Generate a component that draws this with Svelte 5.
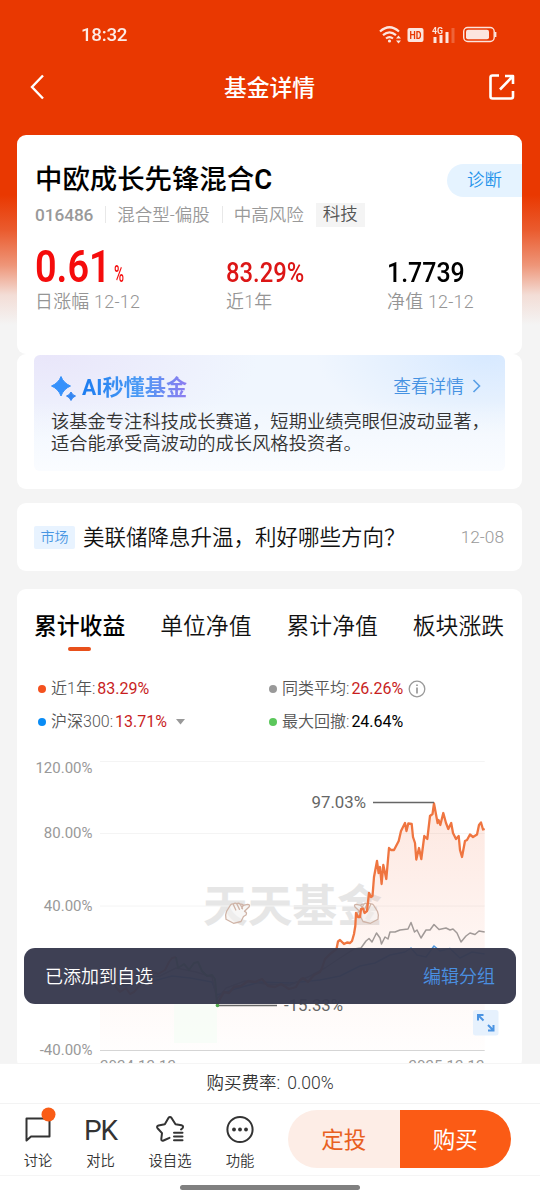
<script>
	const tabs = ['累计收益', '单位净值', '累计净值', '板块涨跌'];

	const legend = [
		{ color: '#f4511e', name: '近1年', value: '83.29%', up: true },
		{ color: '#999', name: '同类平均', value: '26.26%', up: true, info: true },
		{ color: '#0a8cf5', name: '沪深300', value: '13.71%', up: true, more: true },
		{ color: '#5bc75b', name: '最大回撤', value: '24.64%', up: false }
	];

	const grid = [
		{ y: 761.5, label: '120.00%', ty: 773 },
		{ y: 833.5, label: '80.00%', ty: 838 },
		{ y: 906, label: '40.00%', ty: 910.5 }
	];

	const before =
		'100,978 108,972 114,985 120,992 126,988 130,994 134,992 140,985 146,979 151,971 158,974 165,970 169,962 172,958 176,957';
	const drawdown =
		'176,957 178,968 184,964 189,970 194,963 198,962 202,971 207,976 212,975 215,979 216,990 217,1006';
	const fund =
		'217,1006 220,999 224,992 229,993 234,987 241,986 248,981 255,982 262,979 268,986 275,987 281,984 289,989 296,987 300,980 303,978 308,982 314,975 320,972 322,968 325,959 330,954 336.5,949 338,941.5 340,940 344,944 347,942.5 350,943 352,941 354,934 355.3,926 356,913 358,917 360,917 361,909 363,908.5 364.5,913 367,911 369,893 371,897 372.5,896 374,877 377,861 378.6,873 380,867 381.6,884 383.3,865 386.3,879 389,848 391,850 394,850 398.7,841 401,831 405,823 406.5,831 408.3,823.5 411.7,824 413,837 415,843 416.3,859.5 419,848 421.3,859 424.3,836 427.3,839 430,816 432.5,814 434,803.5 437.6,823 438.6,820 440.3,825 443.3,813 446,823 448.3,829 451.2,823 453,833 456,839 458.7,836 460,850 462,857 465,841 467,840 470,834.5 473,837 477,834.5 479,825 481,822.5 483,829.5 484.7,829';
	const average =
		'100,978 120,985 140,979 160,976 176,968 196,972 212,977 217,999 226,988 245,981 265,984 290,985 310,976 325,968 340,958 354,949 361,948 366,941 369,938.5 372,942 376.5,933 380,938 381.5,944 385,937 388,939 390,932 395,932 400,930 408,929 411,922.5 414.5,932 417,930 421,938 426,930 430,930 434,924.5 439,929.5 446,928 450,930 453,929 457,933 461,942 466,936 470,933 475,934.5 479,931 484.7,932';
	const index300 =
		'100,978 125,986 150,982 172,976 190,978 212,982 217,995 235,989 260,982 290,983 320,980 340,976 360,966 375,963 390,955 405,952 411,948 417,955 426,957 434,946 440,951 450,948.5 460,958 472,952 484.7,954';
	const area = `M100,1050 L${before} L${drawdown} L${fund} L484.7,1050 Z`;
</script>

<div class="phone">
	<header>
		<div class="status">
			<span>18:32</span>
			<svg width="120" height="24" viewBox="378 23 120 24" fill="none" stroke="#fff" opacity=".87">
				<g stroke-width="2.2">
					<path d="M380 31.5Q389.500 23 399 31.500" />
					<path d="M383 35.200Q389.500 29.500 396 35.200" />
					<path d="M386 38.500Q389.500 35.800 393 38.500" />
				</g>
				<circle cx="389.500" cy="41" r="1.600" fill="#fff" stroke="none" />
				<path d="M396 38.500h5l-2.500-3zM396 40.500h5l-2.500 3z" fill="#fff" stroke="none" />
				<rect x="407.500" y="28" width="16" height="14" rx="2" fill="#fff" stroke="none" />
				<text x="409.500" y="39" class="hd" textLength="12" lengthAdjust="spacingAndGlyphs">HD</text>
				<text x="432" y="34" class="net" textLength="11" lengthAdjust="spacingAndGlyphs">4G</text>
				<path d="M435 37v6M441 35v8M447 32v11" stroke-width="3" />
				<path d="M453 28v15" stroke-width="3" opacity=".25" />
				<rect x="463.700" y="27.500" width="30.500" height="14" rx="4" stroke-width="1.400" />
				<rect x="466" y="29.800" width="23" height="9.400" rx="2" fill="#fff" stroke="none" />
				<path d="M495.500 32v5" stroke-width="1.800" />
			</svg>
		</div>
		<div class="nav">
			<svg width="16" height="26" viewBox="0 0 16 26" fill="none" stroke="#fff" stroke-width="2.400">
				<path d="M14 1.500L3 13l11 11.500" />
			</svg>
			<h1>基金详情</h1>
			<svg width="26" height="26" viewBox="0 0 26 26" fill="none" stroke="#fff" stroke-width="2.600" stroke-linejoin="round">
				<path d="M10 1.500H3.500Q1.500 1.500 1.500 3.500v19q0 2 2 2H22q2 0 2-2V17" />
				<path d="M11 15.500L23.500 2.500M16 2h8v8" />
			</svg>
		</div>
	</header>

	<main>
		<section class="card fund">
			<div class="title">
				<h2>中欧成长先锋混合<b>C</b></h2>
				<span class="diagnose">诊断</span>
			</div>
			<div class="tags">
				<span class="code">016486</span>
				<i></i>
				<span>混合型-偏股</span>
				<i></i>
				<span>中高风险</span>
				<b>科技</b>
			</div>
			<div class="stats">
				<div class="stat day">
					<strong><span>0.61</span><small>%</small></strong>
					<em>日涨幅 12-12</em>
				</div>
				<div class="stat year">
					<strong><span>83.29%</span></strong>
					<em>近1年</em>
				</div>
				<div class="stat">
					<strong><span>1.7739</span></strong>
					<em>净值 12-12</em>
				</div>
			</div>
		</section>

		<section class="card ai">
			<div class="ai-box">
				<div class="ai-head">
					<svg width="26" height="26" viewBox="0 0 26 26">
						<path d="M10 .5Q12.500 7 19.500 10Q12.500 13 10 20Q7.500 13 .5 10Q7.500 7 10 .5Z" fill="#3691fb" stroke="#3691fb" stroke-linejoin="round" />
						<path d="M20 16Q21.200 19 24.500 20Q21.200 21.200 20 24.500Q18.800 21.200 15.500 20Q18.800 19 20 16Z" fill="#3486f2" stroke="#3486f2" stroke-linejoin="round" />
					</svg>
					<h3>AI秒懂基金</h3>
					<a href="#detail">查看详情</a>
					<svg class="arrow" width="9" height="14" viewBox="0 0 9 14" fill="none" stroke="#589fe6" stroke-width="1.600">
						<path d="M1.500 1l6 6-6 6" />
					</svg>
				</div>
				<p>该基金专注科技成长赛道，短期业绩亮眼但波动显著，<br />适合能承受高波动的成长风格投资者。</p>
			</div>
		</section>

		<section class="card news">
			<span class="badge">市场</span>
			<span class="headline">美联储降息升温，利好哪些方向？</span>
			<time>12-08</time>
		</section>

		<section class="card trend">
			<div class="tabs">
				{#each tabs as tab, i}
					<span class:active={i === 0}>{tab}</span>
				{/each}
			</div>
			<div class="legend">
				{#each legend as item}
					<div>
						<i style="background: {item.color}"></i>
						<span>{item.name}:</span>
						<em class:up={item.up}>{item.value}</em>
						{#if item.info}
							<svg class="info" width="18" height="18" viewBox="0 0 18 18" fill="none" stroke="#999" stroke-width="1.300">
								<circle cx="9" cy="9" r="7.800" />
								<path d="M9 7.500v6M9 4.500v1.600" stroke-width="1.700" />
							</svg>
						{/if}
						{#if item.more}
							<svg class="more" width="9" height="6" viewBox="0 0 9 6"><path d="M0 0h9L4.500 5.500z" fill="#999" /></svg>
						{/if}
					</div>
				{/each}
			</div>

			<svg class="chart" width="505" height="323" viewBox="17 740 505 323" fill="none">
				<defs>
					<linearGradient id="fade" gradientUnits="userSpaceOnUse" x1="0" y1="800" x2="0" y2="1050">
						<stop offset="0" stop-color="#f5683a" stop-opacity=".16" />
						<stop offset=".6" stop-color="#f5683a" stop-opacity=".06" />
						<stop offset="1" stop-color="#f5683a" stop-opacity=".01" />
					</linearGradient>
				</defs>
				<text x="203" y="922" class="mark" textLength="179" lengthAdjust="spacingAndGlyphs">天天基金</text>
				{#each grid as line}
					<path d="M100 {line.y}H484.700" stroke="#f4f4f4" />
					<text x="92.500" y={line.ty} class="axis" text-anchor="end">{line.label}</text>
				{/each}
				<path d="M100 1050.500H484.700" stroke="#d5d5d5" />
				<text x="92.500" y="1055" class="axis" text-anchor="end">-40.00%</text>
				<path d={area} fill="url(#fade)" />
				<path d="M174 960h43v83h-43z" fill="#f6fcf6" opacity=".8" />
				<g stroke="#cfb3a6" stroke-width="1.300" stroke-linejoin="round" stroke-linecap="round">
					{#each ['', 'translate(604 0) scale(-1 1)'] as flip}
						<g transform={flip}>
							<path
								d="M226.500 911.500L230.500 905Q231.500 903.300 233.300 904Q235 902.500 236.800 903.600Q238.800 902.700 240.300 904.200Q242 903.700 243.300 905.300L247.500 904.300Q250.500 904.300 249 907L244.500 911.300Q247.500 912.500 246 915L243.500 916.500L241 921.500L233.500 923.300L226 919.300Q224.800 915.500 226.500 911.500Z"
								fill="#f4f1f0"
								fill-opacity=".6"
							/>
							<path d="M233.300 904.500l2.500 5.500M237 904.200l2.500 5.200M240.500 904.800l2 4M243.300 905.300l-1.500 3" />
						</g>
					{/each}
				</g>
				<g stroke-linejoin="round">
					<polyline points={index300} stroke="#4c94dc" stroke-width="1.500" />
					<polyline points={average} stroke="#a19a98" stroke-width="1.500" />
					<polyline points={before} stroke="#ef7540" stroke-width="2" />
					<polyline points={drawdown} stroke="#5bb85b" stroke-width="2" />
					<polyline points={fund} stroke="#ef7540" stroke-width="2.300" />
				</g>
				<path d="M373 802.500H434M217 1005.500H277" stroke="#666" stroke-width="1.300" />
				<circle cx="217.500" cy="1005.500" r="1.800" fill="#4da64d" />
				<text x="366" y="808" class="peak" text-anchor="end">97.03%</text>
				<text x="284" y="1011" class="peak">-15.33%</text>
				<text x="100" y="1070.500" class="axis" textLength="76">2024-12-12</text>
				<text x="408.500" y="1070.500" class="axis" textLength="76">2025-12-12</text>
				<rect x="473" y="1010" width="25.500" height="25.500" rx="2.500" fill="#e6f1fd" />
				<path d="M478 1020.500v-5.500h5.500M478.500 1015.500l5 5M488 1030.500h5.500v-5.500M493 1030l-5-5" stroke="#4b94e2" stroke-width="2" />
			</svg>
		</section>
	</main>

	<div class="toast">
		<span>已添加到自选</span>
		<a href="#group">编辑分组</a>
	</div>

	<footer>
		<div class="fee">购买费率: <span>0.00%</span></div>
		<div class="actions">
			<div class="action">
				<svg width="32" height="34" viewBox="22 1107 32 34" fill="none" stroke="#333" stroke-width="2" stroke-linejoin="round">
					<path d="M26.500 1118.500H49.500V1136.500H31L26.500 1140.500Z" />
					<circle cx="48.500" cy="1114.500" r="7" fill="#f95c16" stroke="none" />
				</svg>
				<span>讨论</span>
			</div>
			<div class="action">
				<strong>PK</strong>
				<span>对比</span>
			</div>
			<div class="action">
				<svg width="32" height="34" viewBox="154 1107 32 34" fill="none" stroke="#333" stroke-width="2" stroke-linejoin="round" stroke-linecap="round">
					<path d="M181 1129.500L182.500 1128.300Q184 1126 181.500 1125.300L175.500 1124.300L171.700 1118.200Q170 1116 168.300 1118.200L164.800 1124.300L158.500 1125.500Q156 1126.300 157.800 1128.500L162 1133.200L161.300 1139Q161.300 1141.300 163.500 1140.500L169.500 1137.800" />
					<path d="M174 1132.800h8.500M174 1136.500h8.500M174 1140.200h8.500" />
				</svg>
				<span>设自选</span>
			</div>
			<div class="action">
				<svg width="32" height="34" viewBox="224 1107 32 34" fill="none" stroke="#333" stroke-width="2">
					<circle cx="240" cy="1129.500" r="12.600" />
					<g fill="#333" stroke="none">
						<circle cx="234" cy="1129.500" r="1.900" />
						<circle cx="240" cy="1129.500" r="1.900" />
						<circle cx="246" cy="1129.500" r="1.900" />
					</g>
				</svg>
				<span>功能</span>
			</div>
			<div class="buttons">
				<button>定投</button>
				<button class="buy">购买</button>
			</div>
		</div>
		<div class="home"><i></i></div>
	</footer>
</div>

<style>
	:global(body) {
		margin: 0;
		background: #f4f4f4;
	}
	.phone {
		position: relative;
		display: flex;
		flex-direction: column;
		width: 540px;
		height: 1200px;
		overflow: hidden;
		font-family: Roboto, 'Noto Sans CJK SC', sans-serif;
		font-weight: 350;
		background: linear-gradient(#e93801 0, #e93801 195px, #ea5b2e 230px, #ee9578 265px, #f3ddd6 295px, #f4f4f4 325px);
	}
	h1,
	h2,
	h3,
	p {
		margin: 0;
	}
	i,
	em {
		font-style: normal;
	}
	a {
		text-decoration: none;
	}
	svg {
		flex-shrink: 0;
	}

	header {
		height: 134px;
		flex-shrink: 0;
		color: #fff;
	}
	.status {
		display: flex;
		justify-content: space-between;
		align-items: center;
		height: 46px;
		padding: 12px 42px 0 81px;
	}
	.status span {
		font-size: 18.8px;
		font-weight: 500;
		line-height: 24px;
		letter-spacing: -0.3px;
		opacity: 0.9;
	}
	.hd {
		font-size: 10.5px;
		font-weight: 700;
		fill: #e93801;
		stroke: none;
	}
	.net {
		font-size: 9.5px;
		font-weight: 700;
		fill: #fff;
		stroke: none;
	}
	.nav {
		display: flex;
		justify-content: space-between;
		align-items: center;
		height: 58px;
		padding: 0 25px 0 29px;
	}
	.nav h1 {
		padding: 3px 0 0 5px;
		font-size: 22.8px;
		font-weight: 500;
		line-height: 30px;
	}

	main {
		flex: 1;
		min-height: 0;
		padding: 0 18px 0 17px;
		display: flex;
		flex-direction: column;
	}
	.card {
		flex-shrink: 0;
		box-sizing: border-box;
		background: #fff;
		border-radius: 9px;
	}

	.fund {
		height: 219px;
		margin-top: 0.5px;
		padding: 28px 0 0 18px;
	}
	.title {
		display: flex;
		justify-content: space-between;
	}
	.title h2 {
		font-size: 27.4px;
		font-weight: 500;
		line-height: 34px;
		color: #000;
		white-space: nowrap;
	}
	.title b {
		font-weight: 600;
	}
	.diagnose {
		width: 75px;
		height: 33px;
		box-sizing: border-box;
		padding-left: 20px;
		margin-top: 1px;
		border-radius: 17px 0 0 17px;
		background: #e5f3ff;
		color: #2292ea;
		font-size: 17.4px;
		line-height: 32px;
	}
	.tags {
		display: flex;
		align-items: center;
		height: 24px;
		margin-top: 6px;
		font-size: 17.5px;
		line-height: 22px;
		color: #999;
		white-space: nowrap;
	}
	.tags .code {
		font-size: 17.3px;
		font-weight: 500;
		letter-spacing: -0.1px;
	}
	.tags i {
		width: 1px;
		height: 17px;
		margin: 0 11px 0 12px;
		background: #e8e8e8;
	}
	.tags b {
		height: 24px;
		margin-left: 12px;
		padding: 0 7px;
		font-weight: 350;
		line-height: 23px;
		color: #555;
		background: #f4f4f4;
	}
	.stats {
		display: flex;
		margin-top: 18px;
	}
	.stat {
		display: flex;
		flex-direction: column;
	}
	.stat strong {
		height: 45px;
		font-size: 28px;
		font-weight: 500;
		line-height: 56px;
		color: #000;
	}
	.stat span {
		display: inline-block;
		transform: scaleX(0.89);
		transform-origin: left;
	}
	.stat em {
		font-size: 17.9px;
		line-height: 24px;
		letter-spacing: 0.25px;
		color: #959595;
	}
	.day {
		width: 191px;
	}
	.day strong {
		font-size: 43.5px;
		line-height: 46px;
		color: #f50c0c;
	}
	.day strong span {
		font-weight: 600;
		transform: scaleX(0.87);
	}
	.day small {
		display: inline-block;
		margin-left: -8px;
		font-size: 22px;
		transform: scale(0.62, 1.05);
		transform-origin: left;
	}
	.year {
		width: 161px;
	}
	.year strong {
		color: #dc1616;
	}
	.year strong span {
		transform: scaleX(0.85);
	}

	.ai {
		height: 135px;
		margin-top: 0.5px;
		padding: 1px 17px 0;
	}
	.ai-box {
		height: 116px;
		box-sizing: border-box;
		padding: 18px 0 0 17px;
		border-radius: 6px;
		background:
			linear-gradient(to bottom, transparent 40%, #fafcff 100%),
			radial-gradient(ellipse 170px 80px at 96% 0, #d7e9ff, transparent),
			radial-gradient(ellipse 210px 90px at 3% 0, #e9e6fa, transparent),
			#f0f6fe;
	}
	.ai-head {
		display: flex;
		align-items: center;
		height: 28px;
	}
	.ai-head > svg:first-child {
		margin-top: 4px;
	}
	.ai-head h3 {
		margin: 2px 0 0 5px;
		font-size: 21.2px;
		font-weight: 700;
		line-height: 28px;
		color: transparent;
		background: linear-gradient(90deg, #1c7cf0, #4c9bf5 55%, #8d7cf0);
		background-clip: text;
	}
	.ai-head a {
		margin: -4px 0 0 auto;
		font-size: 17.7px;
		color: #4592e2;
	}
	.ai-head .arrow {
		margin: -2px 24px 0 8px;
	}
	.ai-box p {
		margin-top: 10px;
		font-size: 18.3px;
		line-height: 22px;
		color: #333;
		white-space: nowrap;
	}

	.news {
		display: flex;
		align-items: center;
		height: 68px;
		margin-top: 14px;
		padding: 0 18px 0 17px;
		white-space: nowrap;
	}
	.badge {
		width: 41px;
		height: 23px;
		border-radius: 2px;
		background: #e8f3ff;
		color: #4795e2;
		font-size: 14px;
		line-height: 22px;
		text-align: center;
	}
	.headline {
		margin: -3px 0 0 8px;
		font-size: 21.5px;
		color: #111;
	}
	.news time {
		margin-left: auto;
		font-size: 17.3px;
		color: #999;
	}

	.trend {
		height: 480px;
		margin-top: 18px;
	}
	.tabs {
		display: flex;
		justify-content: space-between;
		height: 64px;
		box-sizing: border-box;
		padding: 22px 18px 0 17px;
		font-size: 22.8px;
		line-height: 32px;
		color: #111;
	}
	.tabs .active {
		font-weight: 500;
		color: #000;
	}
	.tabs .active::after {
		content: '';
		display: block;
		width: 23px;
		height: 4px;
		margin: 4px auto 0;
		border-radius: 2px;
		background: #e8501b;
	}
	.legend {
		display: grid;
		grid-template-columns: 231px 1fr;
		height: 87px;
		box-sizing: border-box;
		padding: 19px 0 0 21px;
		grid-auto-rows: 33px;
	}
	.legend div {
		display: flex;
		align-items: center;
		height: 33px;
		font-size: 16px;
		line-height: 22px;
		color: #555;
		white-space: nowrap;
	}
	.legend span {
		margin-top: 1px;
	}
	.legend i {
		width: 8px;
		height: 8px;
		margin-right: 5px;
		border-radius: 50%;
	}
	.legend em {
		margin: 1px 0 0 2px;
		font-weight: 400;
		color: #000;
	}
	.legend .up {
		color: #c81e1e;
	}
	.info {
		margin-left: 5px;
	}
	.more {
		margin-left: 9px;
	}
	.chart {
		display: block;
	}
	.axis {
		font-size: 15px;
		font-weight: 400;
		fill: #999;
	}
	.peak {
		font-size: 16.8px;
		font-weight: 400;
		fill: #666;
	}
	.mark {
		font-size: 44px;
		font-weight: 700;
		fill: #e6e6e6;
	}

	.toast {
		position: absolute;
		left: 24px;
		top: 948px;
		width: 492px;
		height: 56px;
		box-sizing: border-box;
		display: flex;
		justify-content: space-between;
		align-items: center;
		padding: 0 21px 2px 21px;
		border-radius: 11px;
		background: rgba(56, 58, 78, 0.97);
		color: #fff;
		font-size: 18px;
	}
	.toast a {
		color: #4a90e2;
	}

	footer {
		position: relative;
		height: 137px;
		flex-shrink: 0;
		background: #fff;
	}
	.fee {
		height: 41px;
		box-sizing: border-box;
		border-top: 1px solid #f5f5f5;
		border-bottom: 1px solid #f3f3f3;
		font-size: 17.5px;
		line-height: 38px;
		text-align: center;
		color: #333;
	}
	.fee span {
		margin-left: 3px;
	}
	.actions {
		display: flex;
		height: 72px;
		box-sizing: border-box;
		padding-left: 3px;
		border-bottom: 1px solid #f5f5f5;
	}
	.action {
		display: flex;
		flex-direction: column;
		align-items: center;
		width: 70px;
		padding-top: 3px;
	}
	.action:nth-child(2) {
		width: 55px;
	}
	.action:nth-child(3) {
		width: 84px;
	}
	.action:nth-child(4) {
		width: 56px;
	}
	.action svg {
		overflow: visible;
	}
	.action strong {
		height: 34px;
		font-size: 28px;
		font-weight: 400;
		line-height: 48px;
		letter-spacing: -1px;
		color: #333;
	}
	.action span {
		margin-top: 10px;
		font-size: 14.3px;
		line-height: 20px;
		color: #333;
	}
	.buttons {
		display: flex;
		margin: 6px 0 0 20px;
	}
	.buttons button {
		width: 111.5px;
		height: 58px;
		padding: 0 0 2px;
		border: 0;
		border-radius: 29px 0 0 29px;
		background: #fdede6;
		color: #e8601f;
		font-family: inherit;
		font-size: 22.5px;
	}
	.buttons .buy {
		border-radius: 0 29px 29px 0;
		background: #fb5b15;
		color: #fff;
	}
	.home {
		display: flex;
		justify-content: center;
		padding-top: 9px;
	}
	.home i {
		width: 180px;
		height: 5px;
		border-radius: 3px;
		background: #808080;
	}
</style>
